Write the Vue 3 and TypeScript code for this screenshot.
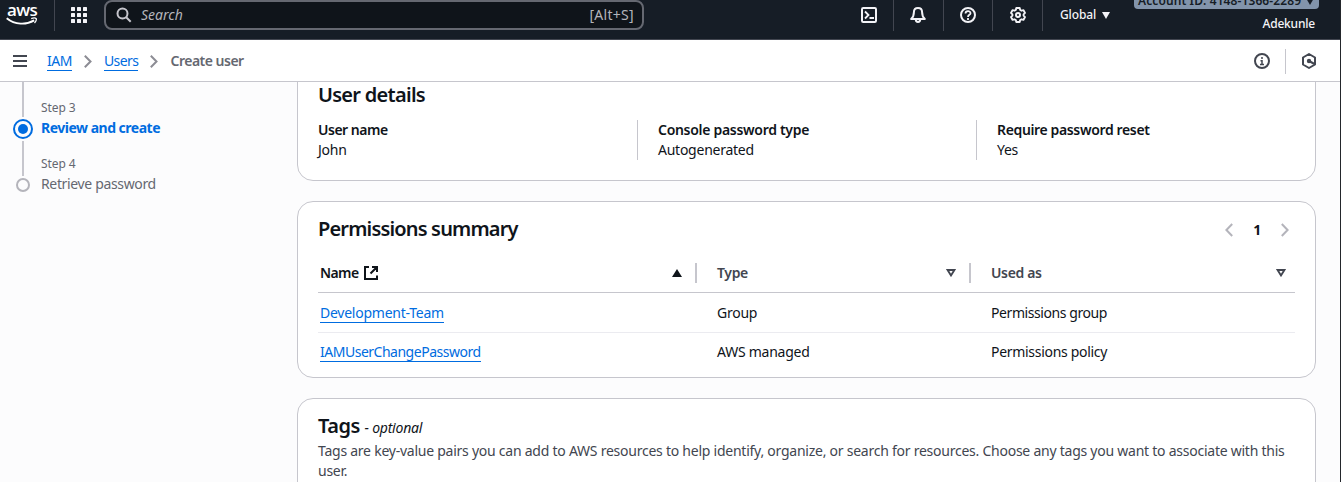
<script setup lang="ts">
interface Permission {
  name: string
  type: string
  usedAs: string
  key: string
}

interface Detail {
  label: string
  value: string
  key: string
}

const details: Detail[] = [
  { label: 'User name', value: 'John', key: 'user' },
  { label: 'Console password type', value: 'Autogenerated', key: 'console' },
  { label: 'Require password reset', value: 'Yes', key: 'reset' },
]

const permissions: Permission[] = [
  { name: 'Development-Team', type: 'Group', usedAs: 'Permissions group', key: 'group' },
  { name: 'IAMUserChangePassword', type: 'AWS managed', usedAs: 'Permissions policy', key: 'policy' },
]
</script>

<template>
  <div class="page">
    <header class="topbar">
      <div class="logo">
        <span class="logo-text">aws</span>
        <svg class="smile" width="32" height="9" viewBox="0 0 32 9">
          <path d="M.7 1.200C9 7.900 20 8.200 28.200 3.400" fill="none" stroke="#fff" stroke-width="1.900" />
          <path d="M25.200 1.600c2-.9 4.200-.8 4.900-.2.4.7-.2 3-1.600 4.600" fill="none" stroke="#fff" stroke-width="1.300" />
        </svg>
      </div>
      <div class="apps">
        <svg width="16" height="16" viewBox="0 0 16 16" fill="#f3f3f7">
          <template v-for="r in 3" :key="r">
            <rect v-for="c in 3" :key="c" :x="(c - 1) * 6" :y="(r - 1) * 6" width="4" height="4" rx=".6" />
          </template>
        </svg>
      </div>
      <div class="search">
        <svg width="16" height="16" viewBox="0 0 16 16" fill="none" stroke="#c6c6cd" stroke-width="2">
          <circle cx="6.500" cy="6.500" r="5" />
          <path d="m10.200 10.200 4.500 4.500" />
        </svg>
        <span class="placeholder">Search</span>
        <span class="shortcut">[Alt+S]</span>
      </div>
      <div class="tools">
        <div class="tool shell">
          <svg width="16" height="16" viewBox="0 0 16 16" fill="none" stroke="#f3f3f7" stroke-width="2">
            <rect x="1" y="1" width="14" height="14" rx="1.200" />
            <path d="m4 4.500 3.500 3.500L4 11.500M8.500 11H13" stroke-width="1.800" />
          </svg>
        </div>
        <div class="tool">
          <svg width="16" height="16" viewBox="0 0 16 16" fill="none" stroke="#f3f3f7" stroke-width="2" stroke-linejoin="round">
            <path d="M8 1C5.300 1 3.900 3 3.900 5.300c0 3.300-.7 4.900-2.700 6.700h13.600c-2-1.800-2.700-3.400-2.700-6.700C12.100 3 10.700 1 8 1Z" />
            <path d="M5.800 12.500c0 3.300 4.400 3.300 4.400 0" />
          </svg>
        </div>
        <div class="tool">
          <svg width="16" height="16" viewBox="0 0 16 16" fill="none" stroke="#f3f3f7" stroke-width="2">
            <circle cx="8" cy="8" r="7" />
            <path d="M5.500 6.500C5.500 3.300 10.500 3.400 10.500 6.200 10.500 8 8 7.700 8 10M8 11v2" stroke-width="1.800" />
          </svg>
        </div>
        <div class="tool">
          <svg width="16" height="16" viewBox="0 0 16 16" fill="none" stroke="#f3f3f7" stroke-width="2" stroke-linejoin="round">
            <path d="M6.300 1h3.400l.5 2 1.300.7 2-.5 1.500 2.700L13.600 7.300v1.400l1.400 1.400-1.500 2.700-2-.5-1.300.7-.5 2H6.300l-.5-2-1.300-.7-2 .5L1 10.100l1.400-1.400V7.300L1 5.900l1.500-2.700 2 .5L5.800 3Z" stroke-width="1.900" />
            <circle cx="8" cy="8" r="2" />
          </svg>
        </div>
        <div class="region">
          <span>Global</span>
          <svg width="8" height="7" viewBox="0 0 8 7"><path d="M0 0h8L4 7Z" fill="#f3f3f7" /></svg>
        </div>
      </div>
      <div class="account">
        <div class="badge">
          <span>Account ID: 4148-1366-2289</span>
          <svg width="8" height="7" viewBox="0 0 8 7"><path d="M0 0h8L4 7Z" fill="#161d26" /></svg>
        </div>
        <span class="person">Adekunle</span>
      </div>
    </header>

    <nav class="crumbs">
      <svg class="menu" width="14" height="12" viewBox="0 0 14 12" stroke="#424650" stroke-width="2"><path d="M0 1h14M0 6h14M0 11h14" /></svg>
      <a class="link iam">IAM</a>
      <svg class="chev" width="8" height="13" viewBox="0 0 8 13" fill="none" stroke="#8c8c94" stroke-width="2"><path d="m.8.8 5.700 5.700-5.700 5.700" /></svg>
      <a class="link users">Users</a>
      <svg class="chev" width="8" height="13" viewBox="0 0 8 13" fill="none" stroke="#8c8c94" stroke-width="2"><path d="m.8.8 5.700 5.700-5.700 5.700" /></svg>
      <span class="current">Create user</span>
      <div class="panel-tools">
        <svg width="16" height="16" viewBox="0 0 16 16" fill="none" stroke="#424650" stroke-width="2">
          <circle cx="8" cy="8" r="7" />
          <path d="M8 4v2M6.500 7.700H8V12M6 11.500h4" stroke-width="1.500" />
        </svg>
        <i class="rule"></i>
        <svg width="16" height="16" viewBox="0 0 16 16" fill="none" stroke="#424650" stroke-width="2" stroke-linejoin="round">
          <path d="M8 1l6 3.500v7L8 15l-6-3.500v-7Z" />
          <circle cx="8" cy="8" r="2.200" fill="#424650" stroke="none" />
          <path d="m8 8 5.500 3" />
        </svg>
      </div>
    </nav>

    <main class="body">
      <aside class="steps">
        <div class="track">
          <i class="line first"></i>
          <i class="dot active"></i>
          <i class="line"></i>
          <i class="dot"></i>
        </div>
        <div class="labels">
          <span class="step-no">Step 3</span>
          <span class="step-name on">Review and create</span>
          <span class="step-no">Step 4</span>
          <span class="step-name">Retrieve password</span>
        </div>
      </aside>

      <div class="content">
        <section class="card details-card">
          <h2 class="t-details">User details</h2>
          <div class="details">
            <div v-for="d in details" :key="d.key" class="detail">
              <strong :class="d.key">{{ d.label }}</strong>
              <span>{{ d.value }}</span>
            </div>
          </div>
        </section>

        <section class="card perms">
          <div class="card-head">
            <h2 class="t-perms">Permissions summary</h2>
            <div class="pager">
              <svg width="8" height="14" viewBox="0 0 8 14" fill="none" stroke="#b4b4bb" stroke-width="2"><path d="M7.200 1 1.400 7l5.800 6" /></svg>
              <span>1</span>
              <svg width="8" height="14" viewBox="0 0 8 14" fill="none" stroke="#b4b4bb" stroke-width="2"><path d="M.8 1l5.800 6-5.800 6" /></svg>
            </div>
          </div>
          <div class="row head">
            <div class="cell sorted">
              <span class="h-name">Name</span>
              <svg class="ext" width="14" height="14" viewBox="0 0 14 14" fill="none" stroke="#0f141a" stroke-width="2">
                <path d="M5 1H1v12h12V9.500M8 1h5v5M13 1 6.500 7.500" />
              </svg>
              <svg class="sort" width="10" height="8" viewBox="0 0 10 8"><path d="M5 0l5 8H0Z" fill="#0f141a" /></svg>
            </div>
            <div class="cell">
              <span>Type</span>
              <svg class="sort" width="10" height="8" viewBox="0 0 10 8" fill="none" stroke="#424650" stroke-width="1.900"><path d="M1.600 1h6.800L5 6.400Z" /></svg>
            </div>
            <div class="cell">
              <span>Used as</span>
              <svg class="sort" width="10" height="8" viewBox="0 0 10 8" fill="none" stroke="#424650" stroke-width="1.900"><path d="M1.600 1h6.800L5 6.400Z" /></svg>
            </div>
          </div>
          <div v-for="p in permissions" :key="p.name" class="row" :class="'row-' + p.key">
            <div class="cell"><a class="link">{{ p.name }}</a></div>
            <div class="cell">{{ p.type }}</div>
            <div class="cell used">{{ p.usedAs }}</div>
          </div>
        </section>

        <section class="card tags">
          <h2 class="t-tags">Tags <em>- optional</em></h2>
          <p>Tags are key-value pairs you can add to AWS resources to help identify, organize, or search for resources. Choose any tags you want to associate with this user.</p>
        </section>
      </div>
    </main>
  </div>
</template>

<style>
html,
body {
  margin: 0;
  overflow: hidden;
}
</style>

<style scoped>
* {
  box-sizing: border-box;
}
.page {
  width: 1341px;
  height: 482px;
  overflow: hidden;
  border-right: 1px solid #23262b;
  background: #fcfcfd;
  color: #0f141a;
  font: 14px/20px "Noto Sans", "Open Sans", sans-serif;
  letter-spacing: -0.25px;
  white-space: nowrap;
}
svg {
  display: block;
  flex: none;
}
.topbar {
  display: flex;
  height: 40px;
  background: #161d26;
  border-bottom: 1px solid #424650;
  color: #f3f3f7;
}
.logo {
  width: 55px;
  height: 31px;
  padding-left: 6px;
  border-right: 1px solid #424650;
}
.logo-text {
  display: block;
  padding-left: 1px;
  font: 600 17px/20px "Open Sans", sans-serif;
  letter-spacing: -0.6px;
  color: #fff;
}
.smile {
  margin-top: -3px;
}
.apps {
  width: 49px;
  padding: 7px 0 0 16px;
}
.search {
  display: flex;
  align-items: center;
  width: 540px;
  height: 30px;
  padding: 0 8px 0 10px;
  border: 2px solid #656871;
  border-radius: 8px;
  background: #0f141a;
  color: #b4b4bb;
}
.placeholder {
  padding-left: 9px;
  font-style: italic;
  letter-spacing: 0;
}
.shortcut {
  margin-left: auto;
  letter-spacing: 0.3px;
}
.tools {
  display: flex;
  height: 31px;
  margin-left: 201px;
}
.tool {
  width: 50px;
  height: 31px;
  padding: 7px 0 0 16px;
  border-right: 1px solid #424650;
}
.tool:nth-child(3) {
  width: 49px;
}
.shell {
  width: 49px;
}
.tool:nth-child(4) {
  padding-left: 17px;
}
.region {
  display: flex;
  align-items: center;
  gap: 6px;
  height: 30px;
  padding-left: 17px;
  font-size: 12px;
  font-weight: 500;
  letter-spacing: -0.1px;
}
.account {
  display: flex;
  flex-direction: column;
  align-items: flex-end;
  margin-left: auto;
  padding-right: 21px;
  font-size: 12px;
}
.badge {
  display: flex;
  align-items: flex-end;
  gap: 5px;
  width: 185px;
  height: 9px;
  padding: 0 7px 4px 4px;
  border-radius: 0 0 4px 4px;
  background: #8294ab;
  color: #161d26;
  font-weight: 600;
  line-height: 8px;
  letter-spacing: 0.1px;
}
.person {
  padding: 5px 4px 0 0;
  font-weight: 500;
  letter-spacing: -0.2px;
}
.crumbs {
  display: flex;
  align-items: center;
  height: 42px;
  padding: 1px 23px 0 13px;
  border-bottom: 1px solid #c6c6cd;
  background: #fff;
}
.link {
  color: #006ce0;
  border-bottom: 1px solid #006ce0;
  line-height: 19px;
}
.iam {
  margin-left: 20px;
  letter-spacing: -0.5px;
}
.users {
  letter-spacing: -0.55px;
}
.chev {
  margin: 0 12px;
}
.current {
  color: #656871;
  font-weight: 600;
  letter-spacing: -0.5px;
}
.panel-tools {
  display: flex;
  align-items: center;
  margin-left: auto;
}
.rule {
  width: 1px;
  height: 25px;
  margin: 0 15px;
  background: #c6c6cd;
}
.body {
  display: flex;
  height: 400px;
  overflow: hidden;
}
.steps {
  display: flex;
  width: 297px;
  padding-left: 13px;
}
.track {
  display: flex;
  flex-direction: column;
  align-items: center;
  width: 20px;
}
.line {
  width: 2px;
  height: 35px;
  margin: 2px 0;
  background: #c6c6cd;
}
.line.first {
  margin-top: 0;
}
.dot {
  width: 14px;
  height: 14px;
  border: 2px solid #b4b4bb;
  border-radius: 50%;
}
.dot.active {
  width: 20px;
  height: 20px;
  padding: 3px;
  border-color: #006ce0;
  background: #006ce0;
  background-clip: content-box;
}
.labels {
  display: flex;
  flex-direction: column;
  padding: 18px 0 0 8px;
  color: #656871;
}
.step-no {
  font-size: 12px;
  line-height: 16px;
  letter-spacing: -0.1px;
}
.step-name {
  height: 20px;
  line-height: 24px;
  letter-spacing: -0.35px;
}
.step-name + .step-no {
  margin-top: 20px;
}
.step-name.on {
  color: #006ce0;
  font-weight: 700;
  letter-spacing: -0.5px;
}
.content {
  display: flex;
  flex-direction: column;
  gap: 20px;
  width: 1019px;
}
.card {
  flex: none;
  padding: 0 20px;
  border: 1px solid #c6c6cd;
  border-radius: 16px;
  background: #fff;
}
h2 {
  margin: 0;
  font-size: 20px;
  line-height: 24px;
  font-weight: 600;
}
.t-details {
  letter-spacing: -0.72px;
}
.t-perms {
  letter-spacing: -0.83px;
}
.t-tags {
  letter-spacing: -0.5px;
}
.details-card {
  height: 119px;
  margin-top: -20px;
  padding-top: 20px;
}
.details {
  display: grid;
  grid-template-columns: 319px 339px 1fr;
  margin-top: 13px;
}
.detail {
  display: flex;
  flex-direction: column;
  height: 40px;
}
.detail + .detail {
  padding-left: 20px;
  border-left: 1px solid #c6c6cd;
}
.detail strong {
  font-weight: 600;
}
.detail .user {
  letter-spacing: -0.48px;
}
.detail .console {
  letter-spacing: -0.3px;
}
.detail .reset {
  letter-spacing: -0.36px;
}
.perms {
  height: 177px;
}
.card-head {
  display: flex;
  justify-content: space-between;
  height: 51px;
  padding-top: 15px;
}
.pager {
  display: flex;
  align-items: center;
  gap: 20px;
  height: 26px;
  padding-right: 6px;
  font-weight: 700;
}
.row {
  display: grid;
  grid-template-columns: 379px 274px 1fr;
  height: 40px;
}
.row-group {
  border-bottom: 1px solid #ebebf0;
}
.row-policy {
  height: 38px;
}
.row-policy .link {
  letter-spacing: -0.49px;
}
.row-group .used {
  letter-spacing: -0.42px;
}
.row-policy .used {
  letter-spacing: -0.3px;
}
.cell {
  display: flex;
  align-items: center;
  padding-left: 20px;
}
.cell:first-child {
  padding-left: 2px;
}
.head {
  border-bottom: 1px solid #c6c6cd;
  color: #424650;
  font-weight: 600;
  letter-spacing: -0.35px;
}
.head .cell {
  height: 20px;
  margin-top: 10px;
  padding-right: 9px;
}
.head .cell:not(:last-child) {
  border-right: 2px solid #c6c6cd;
  padding-right: 13px;
}
.sorted {
  color: #0f141a;
}
.h-name {
  letter-spacing: -0.6px;
}
.ext {
  margin-left: 5px;
}
.sort {
  margin-left: auto;
}
.tags {
  height: 177px;
  padding-top: 15px;
}
em {
  font-size: 14px;
  font-weight: 400;
  letter-spacing: -0.22px;
}
p {
  margin: 1px 0 0;
  color: #424650;
  letter-spacing: -0.245px;
  white-space: normal;
}
</style>
